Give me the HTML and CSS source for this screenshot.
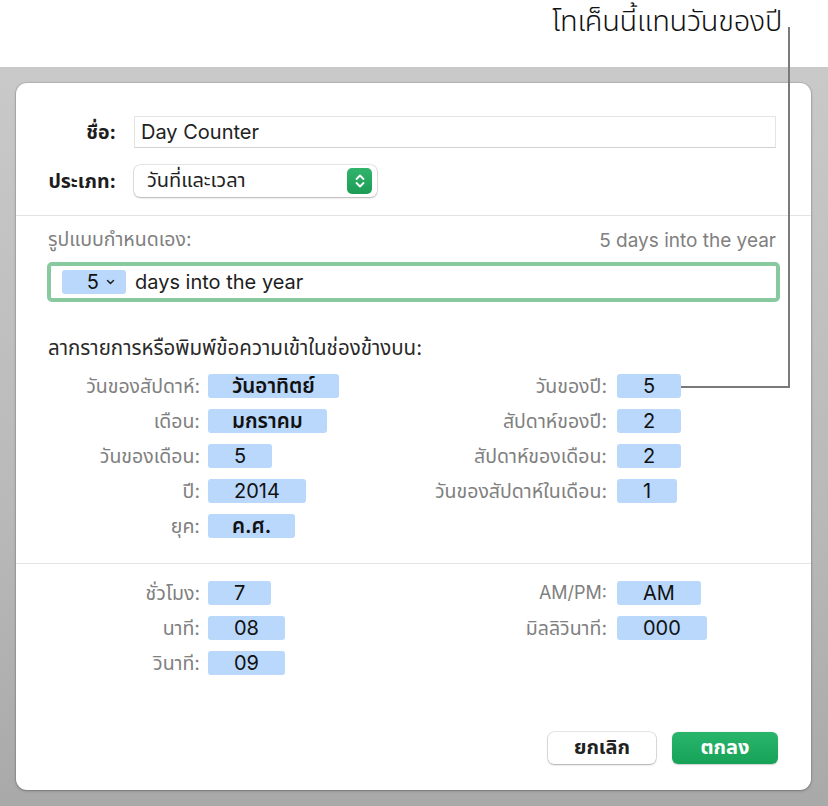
FILE: index.html
```html
<!DOCTYPE html>
<html lang="th">
<head>
<meta charset="utf-8">
<title>Day Counter</title>
<link rel="stylesheet" href="styles.css">
</head>
<body>
<header class="caption"><span class="caption-text">โทเค็นนี้แทนวันของปี</span></header>
<main class="stage">
  <section class="dialog">
    <div class="top">
      <div class="row">
        <span class="lbl strong">ชื่อ:</span>
        <div class="input">Day Counter</div>
      </div>
      <div class="row">
        <span class="lbl strong">ประเภท:</span>
        <div class="popup">
          <span class="popup-text">วันที่และเวลา</span>
          <span class="stepper">
            <svg width="12" height="16" viewBox="0 0 12 16"><path d="M2.5 6 L6 2.5 L9.5 6 M2.5 10 L6 13.5 L9.5 10" fill="none" stroke="#fff" stroke-width="1.8" stroke-linecap="round" stroke-linejoin="round"/></svg>
          </span>
        </div>
      </div>
    </div>
    <div class="sep"></div>
    <div class="format">
      <div class="format-head"><span class="thai-text">รูปแบบกำหนดเอง:</span><span class="latin-text">5 days into the year</span></div>
      <div class="format-field">
        <span class="field-token">5<svg width="9" height="6" viewBox="0 0 9 6"><path d="M1.5 1.5 L4.5 4.5 L7.5 1.5" fill="none" stroke="#222" stroke-width="1.5" stroke-linecap="round" stroke-linejoin="round"/></svg></span>
        <span class="field-text">days into the year</span>
      </div>
    </div>
    <p class="hint">ลากรายการหรือพิมพ์ข้อความเข้าในช่องข้างบน:</p>
    <div class="tokens date">
      <span class="lbl">วันของสัปดาห์:</span><span class="token thai">วันอาทิตย์</span>
      <span class="lbl">วันของปี:</span><span class="token">5</span>
      <span class="lbl">เดือน:</span><span class="token thai">มกราคม</span>
      <span class="lbl">สัปดาห์ของปี:</span><span class="token">2</span>
      <span class="lbl">วันของเดือน:</span><span class="token">5</span>
      <span class="lbl">สัปดาห์ของเดือน:</span><span class="token">2</span>
      <span class="lbl">ปี:</span><span class="token">2014</span>
      <span class="lbl">วันของสัปดาห์ในเดือน:</span><span class="token narrow">1</span>
      <span class="lbl">ยุค:</span><span class="token thai">ค.ศ.</span>
    </div>
    <div class="sep"></div>
    <div class="tokens time">
      <span class="lbl">ชั่วโมง:</span><span class="token">7</span>
      <span class="lbl latin">AM/PM:</span><span class="token">AM</span>
      <span class="lbl">นาที:</span><span class="token">08</span>
      <span class="lbl">มิลลิวินาที:</span><span class="token">000</span>
      <span class="lbl">วินาที:</span><span class="token">09</span>
    </div>
    <div class="actions">
      <button class="btn cancel">ยกเลิก</button>
      <button class="btn ok">ตกลง</button>
    </div>
  </section>
</main>
<div class="callout-line"></div>
</body>
</html>
```
FILE: styles.css
```css
* { box-sizing: border-box; }
html, body { margin: 0; padding: 0; }
body {
  width: 828px;
  height: 806px;
  overflow: hidden;
  position: relative;
  background: #fff;
  font-family: "Inter", "Noto Sans Thai", "Noto Sans Thai UI", "Noto Sans", "Liberation Sans", sans-serif;
  color: #1d1d1d;
}
.caption {
  height: 67px;
  display: flex;
  justify-content: flex-end;
  align-items: flex-start;
  padding: 2px 46px 0 0;
}
.caption-text {
  font-size: 29px;
  font-weight: 300;
  color: #111;
  line-height: 38px;
  letter-spacing: -0.3px;
}
.stage {
  height: 739px;
  padding: 16px 17px 16px 16px;
  background: linear-gradient(180deg, #c9c9c9 0%, #b9b9b9 60%, #a9a9a9 100%);
}
.dialog {
  height: 707px;
  background: #fff;
  border-radius: 11px;
  box-shadow: 0 0 0 1px rgba(0,0,0,0.08), 0 1px 3px rgba(0,0,0,0.25);
  display: flex;
  flex-direction: column;
}
.top {
  padding: 33px 35px 0 32px;
  display: flex;
  flex-direction: column;
  gap: 17px;
}
.row {
  display: grid;
  grid-template-columns: 68px 1fr;
  column-gap: 18px;
  align-items: center;
}
.lbl {
  text-align: right;
  font-size: 19.5px;
  line-height: 24px;
  color: #808080;
  white-space: nowrap;
}
.lbl.latin { font-size: 18px; }
.lbl.strong {
  color: #1d1d1d;
  font-weight: 700;
}
.input {
  height: 32px;
  border: 1px solid #e4e4e4;
  border-bottom-color: #d2d2d2;
  display: flex;
  align-items: center;
  padding-left: 6px;
  font-size: 20px;
  color: #222;
}
.popup {
  width: 243px;
  height: 32px;
  border-radius: 6px;
  background: #fff;
  box-shadow: 0 0 0 0.5px rgba(0,0,0,0.18), 0 1px 2px rgba(0,0,0,0.22);
  display: flex;
  align-items: center;
  justify-content: space-between;
  padding: 0 5px 0 13px;
}
.popup-text { font-size: 20px; color: #222; }
.stepper {
  width: 25px;
  height: 26px;
  border-radius: 5px;
  background: linear-gradient(180deg, #31b46c, #1c9c56);
  display: flex;
  align-items: center;
  justify-content: center;
}
.sep {
  height: 1px;
  background: #e3e3e3;
  margin-top: 18px;
}
.format {
  padding: 12px 35px 0 31px;
}
.format-head {
  display: flex;
  justify-content: space-between;
  align-items: center;
  padding-left: 1px;
  color: #808080;
  height: 24px;
}
.thai-text { font-size: 19.5px; }
.latin-text { font-size: 19px; }
.format-field {
  margin-top: 10px;
  width: 733px;
  height: 40px;
  border: 4px solid #88c9a0;
  border-radius: 5px;
  display: flex;
  align-items: center;
  padding-left: 11px;
  gap: 9px;
}
.field-token {
  width: 64px;
  height: 24px;
  border-radius: 3px;
  background: #b9d8fc;
  display: flex;
  align-items: center;
  justify-content: flex-end;
  gap: 7px;
  padding-right: 11px;
  font-size: 20px;
  color: #111;
}
.field-text { font-size: 20px; color: #1d1d1d; }
.hint {
  margin: 34px 0 0 32px;
  font-size: 20.5px;
  color: #2a2a2a;
  line-height: 24px;
}
.tokens {
  display: grid;
  grid-template-columns: 152px 160px 247px 1fr;
  grid-auto-rows: 24px;
  row-gap: 11px;
  align-items: center;
  padding-left: 32px;
}
.tokens.date { margin-top: 14px; }
.tokens.time { margin-top: 17px; }
.tokens .lbl { justify-self: end; }
.tokens .token:nth-child(4n+2) { margin-left: 8px; }
.tokens .token:nth-child(4n) { margin-left: 10px; }
.token {
  justify-self: start;
  min-width: 63px;
  height: 24px;
  padding: 0 26px;
  border-radius: 3px;
  background: #b9d8fc;
  display: flex;
  align-items: center;
  justify-content: center;
  font-size: 20px;
  color: #111;
}
.token.thai { font-weight: 600; font-size: 20.5px; padding: 0 24px; }
.token.narrow { min-width: 60px; }
.tokens.date + .sep { margin-top: 25px; }
.actions {
  margin-top: auto;
  display: flex;
  justify-content: flex-end;
  gap: 16px;
  padding: 0 33px 26px 0;
}
.btn {
  height: 32px;
  border: none;
  border-radius: 6px;
  font-family: inherit;
  font-size: 20px;
  font-weight: 700;
  padding: 0;
}
.btn.cancel {
  width: 108px;
  background: #fff;
  color: #222;
  box-shadow: 0 0 0 0.5px rgba(0,0,0,0.18), 0 1px 2px rgba(0,0,0,0.25);
}
.btn.ok {
  width: 106px;
  background: linear-gradient(180deg, #29b56b, #16a257);
  color: #fff;
  box-shadow: 0 0.5px 1.5px rgba(0,0,0,0.2);
}
.callout-line {
  position: absolute;
  left: 681px;
  top: 27px;
  width: 109px;
  height: 361px;
  border-right: 2px solid #7a7a7a;
  border-bottom: 2px solid #7a7a7a;
}
```
